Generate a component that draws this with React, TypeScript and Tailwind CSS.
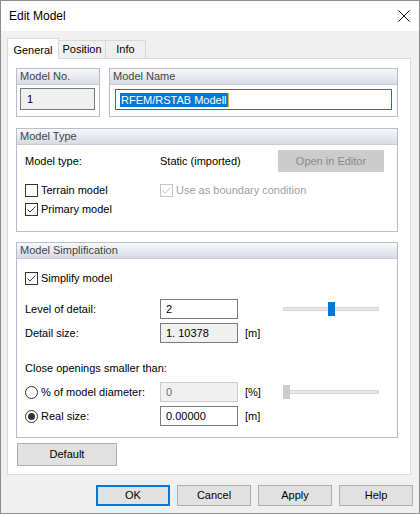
import type { ReactNode } from 'react';

const font = { fontFamily: '"Liberation Sans", Arial, sans-serif' };

function GroupBox({ title, className = '', children }: { title: string; className?: string; children: ReactNode }) {
  return (
    <div className={`border border-[#b9bccc] bg-white ${className}`}>
      <div className="h-[16px] border-b border-[#c8cbd6] bg-gradient-to-b from-[#f7f8fa] to-[#d8dbe5] pl-[3px] text-[11px] leading-[15px] text-[#444]">
        {title}
      </div>
      {children}
    </div>
  );
}

function CheckBox({ checked, disabled, label }: { checked?: boolean; disabled?: boolean; label: string }) {
  const stroke = disabled ? '#c4c4c4' : '#333333';
  return (
    <div className="flex h-[13px] items-center">
      <div className={`h-[13px] w-[13px] shrink-0 border bg-white ${disabled ? 'border-[#c4c4c4]' : 'border-[#333]'}`}>
        {checked && (
          <svg width="11" height="11" viewBox="0 0 11 11">
            <path d="M1.5 5.5 L4 8 L9.5 2.5" fill="none" stroke={stroke} strokeWidth="1" />
          </svg>
        )}
      </div>
      <span className={`ml-[3px] whitespace-nowrap text-[11px] ${disabled ? 'text-[#a0a0a0]' : 'text-black'}`}>{label}</span>
    </div>
  );
}

function Radio({ checked, label }: { checked?: boolean; label: string }) {
  return (
    <div className="flex items-center">
      <div className="flex h-[13px] w-[13px] shrink-0 items-center justify-center rounded-full border border-[#333] bg-white">
        {checked && <div className="h-[7px] w-[7px] rounded-full bg-[#333]" />}
      </div>
      <span className="ml-[3px] whitespace-nowrap text-[11px] text-black">{label}</span>
    </div>
  );
}

function Field({ value, variant = 'normal' }: { value: string; variant?: 'normal' | 'readonly' | 'disabled' }) {
  const cls =
    variant === 'normal'
      ? 'bg-white border-[#7a7a7a] text-black'
      : variant === 'readonly'
        ? 'bg-[#f0f0f0] border-[#7a7a7a] text-black'
        : 'bg-[#f0f0f0] border-[#cccccc] text-[#6d6d6d]';
  return (
    <div className={`flex h-[20px] w-[78px] shrink-0 items-center border pl-[5px] text-[11px] ${cls}`}>{value}</div>
  );
}

function Unit({ text }: { text?: string }) {
  return <span className="w-[45px] shrink-0 pl-[7px]">{text}</span>;
}

function Slider({ pos, disabled }: { pos: number; disabled?: boolean }) {
  return (
    <div className="relative h-[14px] w-[96px] shrink-0">
      <div className="absolute left-0 right-0 top-[5px] h-[4px] border border-[#d6d6d6] bg-[#e7e7e7]" />
      <div
        className={`absolute top-0 h-[14px] w-[7px] ${disabled ? 'bg-[#cccccc]' : 'bg-[#0078d7]'}`}
        style={{ left: pos }}
      />
    </div>
  );
}

function Button({ label, primary, className = '' }: { label: string; primary?: boolean; className?: string }) {
  return (
    <div
      className={`flex items-center justify-center bg-[#e1e1e1] text-[11px] text-black ${
        primary ? 'border-2 border-[#0078d7]' : 'border border-[#adadad]'
      } ${className}`}
    >
      {label}
    </div>
  );
}

export default function App() {
  return (
    <div className="flex h-[514px] w-[420px] flex-col border border-[#8c8c8c] bg-[#f0f0f0]" style={font}>
      {/* title bar */}
      <div className="flex h-[30px] items-center justify-between bg-white pl-[8px] pr-[9px]">
        <span className="text-[12px] text-black">Edit Model</span>
        <svg width="12" height="12" viewBox="0 0 12 12">
          <path d="M0.5 0.5 L11.5 11.5 M11.5 0.5 L0.5 11.5" stroke="#111" strokeWidth="1" />
        </svg>
      </div>

      <div className="flex flex-1 flex-col pl-[6px] pr-[8px] pt-[7px]">
        {/* tabs */}
        <div className="relative z-10 flex h-[20px] items-end text-[11px]">
          <div className="mb-[-1px] flex h-[21px] w-[52px] items-start justify-center border border-b-0 border-[#d9d9d9] bg-white pt-[3px]">
            General
          </div>
          <div className="flex h-[18px] w-[47px] items-center justify-center border border-b-0 border-l-0 border-[#d9d9d9] bg-[#f0f0f0]">
            Position
          </div>
          <div className="flex h-[18px] w-[40px] items-center justify-center border border-b-0 border-l-0 border-[#d9d9d9] bg-[#f0f0f0]">
            Info
          </div>
        </div>

        {/* panel */}
        <div className="flex h-[417px] w-[404px] flex-col border border-[#d9d9d9] bg-white pl-[8px] pr-[12px] pt-[9px]">
          <div className="flex h-[49px] gap-[9px]">
            <GroupBox title="Model No." className="w-[84px]">
              <div className="ml-[3px] mt-[3px] flex h-[22px] w-[75px] items-center border border-[#7a7a7a] bg-[#f0f0f0] pl-[6px] text-[11px]">
                1
              </div>
            </GroupBox>
            <GroupBox title="Model Name" className="flex-1">
              <div className="ml-[5px] mt-[4px] flex h-[21px] w-[277px] items-center border border-[#0078d7] bg-white pl-[4px] text-[11px]">
                <span className="bg-[#0078d7] px-[1px] leading-[14px] text-white">RFEM/RSTAB Modell</span>
                <span className="h-[14px] w-[1px] bg-[#e8a64a]" />
              </div>
            </GroupBox>
          </div>

          <GroupBox title="Model Type" className="mt-[11px] h-[104px]">
            <div className="pl-[8px] text-[11px]">
              <div className="mt-[5px] flex h-[22px] items-center">
                <span className="w-[135px] shrink-0">Model type:</span>
                <span className="w-[118px] shrink-0">Static (imported)</span>
                <Button label="Open in Editor" className="h-[22px] w-[106px] shrink-0 !border-[#cccccc] !bg-[#cccccc] !text-[#8a8a8a]" />
              </div>
              <div className="mt-[12px] flex">
                <div className="w-[135px] shrink-0">
                  <CheckBox label="Terrain model" />
                </div>
                <CheckBox checked disabled label="Use as boundary condition" />
              </div>
              <div className="mt-[6px]">
                <CheckBox checked label="Primary model" />
              </div>
            </div>
          </GroupBox>

          <GroupBox title="Model Simplification" className="mt-[10px] h-[196px]">
            <div className="pl-[8px] text-[11px]">
              <div className="mt-[13px]">
                <CheckBox checked label="Simplify model" />
              </div>
              <div className="mt-[14px] flex items-center">
                <span className="w-[135px] shrink-0">Level of detail:</span>
                <Field value="2" />
                <Unit />
                <Slider pos={45} />
              </div>
              <div className="mt-[4px] flex items-center">
                <span className="w-[135px] shrink-0">Detail size:</span>
                <Field value="1. 10378" variant="readonly" />
                <Unit text="[m]" />
              </div>
              <div className="mt-[18px] h-[14px] leading-[14px]">Close openings smaller than:</div>
              <div className="mt-[7px] flex items-center">
                <div className="w-[135px] shrink-0">
                  <Radio label="% of model diameter:" />
                </div>
                <Field value="0" variant="disabled" />
                <Unit text="[%]" />
                <Slider pos={0} disabled />
              </div>
              <div className="mt-[4px] flex items-center">
                <div className="w-[135px] shrink-0">
                  <Radio checked label="Real size:" />
                </div>
                <Field value="0.00000" />
                <Unit text="[m]" />
              </div>
            </div>
          </GroupBox>

          <Button label="Default" className="ml-[1px] mt-[5px] h-[23px] w-[100px]" />
        </div>

        {/* dialog buttons */}
        <div className="mt-[10px] flex justify-end gap-[7px]">
          <Button label="OK" primary className="h-[21px] w-[74px]" />
          <Button label="Cancel" className="h-[21px] w-[74px]" />
          <Button label="Apply" className="h-[21px] w-[74px]" />
          <Button label="Help" className="mr-[-2px] h-[21px] w-[74px]" />
        </div>
      </div>
    </div>
  );
}
